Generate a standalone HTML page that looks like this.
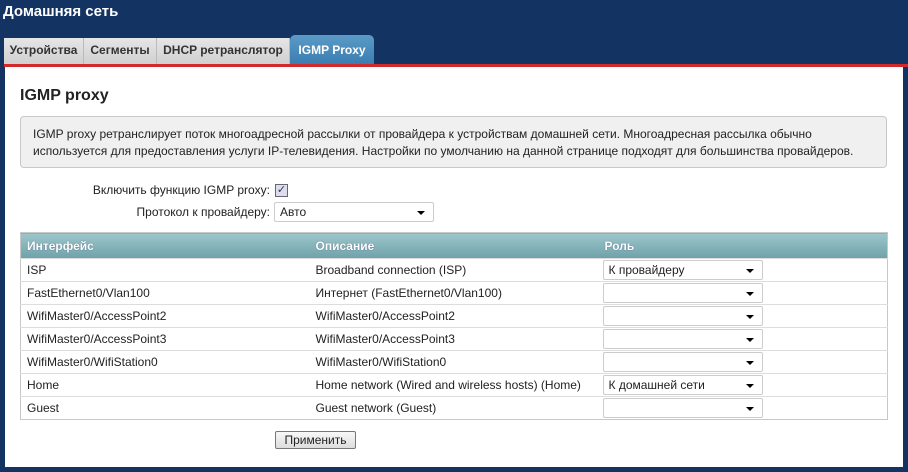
<!DOCTYPE html>
<html><head><meta charset="utf-8"><style>
*{box-sizing:border-box;margin:0;padding:0}
body{width:908px;height:472px;background:#133462;font-family:"Liberation Sans",sans-serif;font-size:12px;color:#222;position:relative;overflow:hidden}
.t{position:absolute;left:3px;top:3px;color:#fff;font-weight:bold;font-size:15px}
.tab{position:absolute;top:38px;height:27px;background:linear-gradient(#e6e6e6,#cfcfcf);border-right:1px solid #bbb;font-weight:bold;color:#333;line-height:25px;text-align:center;font-size:12px}
.act{background:linear-gradient(#5b9bc7,#3a7db0);color:#fff;top:35px;height:30px;line-height:30px;border-radius:5px 5px 0 0;border:none}
.red{position:absolute;left:4px;right:0;top:64px;height:3px;background:#d02a2a}
.panel{position:absolute;left:5px;right:5px;top:67px;bottom:5px;background:#fff}
h1{position:absolute;left:20px;top:87px;font-size:16px;font-weight:bold;color:#222}
.info{position:absolute;left:20px;top:116px;width:867px;height:52px;background:#f0f0f0;border:1px solid #c8c8c8;border-radius:4px;padding:9px 12px;line-height:17px;font-size:12px}
.lbl{position:absolute;text-align:right;width:270px;left:0}
.sel{position:absolute;background:#fff;border:1px solid #ccc;border-radius:2px;height:20px;line-height:18px;padding-left:5px;font-size:12px}
.sel:after{content:"";position:absolute;right:8px;top:8px;border-left:4px solid transparent;border-right:4px solid transparent;border-top:4px solid #000}
table{position:absolute;left:20px;top:232px;width:868px;border-collapse:collapse;border:1px solid #c8c8c8}
th{background:linear-gradient(#9cc6cc,#6fa1a9);color:#fff;text-align:left;height:26px;padding-left:6px;font-size:12px;text-shadow:0 0 1px #457}
td{height:23px;border-top:1px solid #ddd;padding-left:6px;position:relative}
.btn{position:absolute;left:275px;top:431px;width:81px;height:18px;border:1px solid #777;border-radius:2px;background:linear-gradient(#f8f8f8,#ddd);text-align:center;line-height:16px}
</style></head><body>
<div class="t">Домашняя сеть</div>
<div class="tab" style="left:4px;width:80px">Устройства</div>
<div class="tab" style="left:84px;width:73px">Сегменты</div>
<div class="tab" style="left:157px;width:133px">DHCP ретранслятор</div>
<div class="tab act" style="left:290px;width:84px">IGMP Proxy</div>
<div class="red"></div>
<div class="panel"></div>
<h1>IGMP proxy</h1>
<div class="info">IGMP proxy ретранслирует поток многоадресной рассылки от провайдера к устройствам домашней сети. Многоадресная рассылка обычно используется для предоставления услуги IP-телевидения. Настройки по умолчанию на данной странице подходят для большинства провайдеров.</div>
<div class="lbl" style="top:183px">Включить функцию IGMP proxy:</div>
<div style="position:absolute;left:275px;top:184px;width:13px;height:13px;border:1px solid #667;background:#dde;color:#335;font-size:11px;line-height:11px;text-align:center">✓</div>
<div class="lbl" style="top:205px">Протокол к провайдеру:</div>
<div class="sel" style="left:274px;top:202px;width:160px">Авто</div>
<table>
<tr><th style="width:289px">Интерфейс</th><th style="width:289px">Описание</th><th>Роль</th></tr>
<tr><td>ISP</td><td>Broadband connection (ISP)</td><td><div class="sel" style="left:4px;top:1px;width:160px">К провайдеру</div></td></tr>
<tr><td>FastEthernet0/Vlan100</td><td>Интернет (FastEthernet0/Vlan100)</td><td><div class="sel" style="left:4px;top:1px;width:160px"></div></td></tr>
<tr><td>WifiMaster0/AccessPoint2</td><td>WifiMaster0/AccessPoint2</td><td><div class="sel" style="left:4px;top:1px;width:160px"></div></td></tr>
<tr><td>WifiMaster0/AccessPoint3</td><td>WifiMaster0/AccessPoint3</td><td><div class="sel" style="left:4px;top:1px;width:160px"></div></td></tr>
<tr><td>WifiMaster0/WifiStation0</td><td>WifiMaster0/WifiStation0</td><td><div class="sel" style="left:4px;top:1px;width:160px"></div></td></tr>
<tr><td>Home</td><td>Home network (Wired and wireless hosts) (Home)</td><td><div class="sel" style="left:4px;top:1px;width:160px">К домашней сети</div></td></tr>
<tr><td>Guest</td><td>Guest network (Guest)</td><td><div class="sel" style="left:4px;top:1px;width:160px"></div></td></tr>
</table>
<div class="btn">Применить</div>
</body></html>
